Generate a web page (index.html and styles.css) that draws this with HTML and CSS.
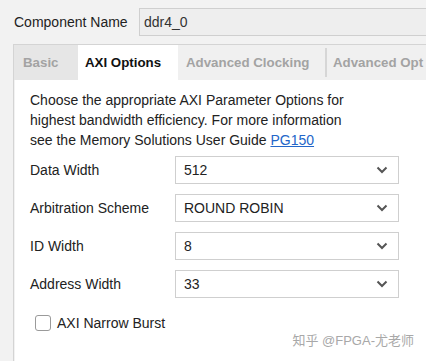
FILE: index.html
```html
<!DOCTYPE html>
<html lang="en">
<head>
  <meta charset="UTF-8" />
  <title>ddr4_0 - AXI Options</title>
  <link rel="stylesheet" href="styles.css">
</head>
<body>

<div class="header">
  <label for="comp-name">Component Name</label>
  <input type="text" id="comp-name" class="name-input" value="ddr4_0" />
</div>

<div class="tabbox">
  <div class="tabs">
    <div class="tab tab-basic">Basic</div>
    <div class="tab tab-active">AXI Options</div>
    <div class="tab tab-clock">Advanced Clocking</div>
    <div class="tab tab-opt">Advanced Opt</div>
  </div>

  <div class="panel">
    <p class="intro">Choose the appropriate AXI Parameter Options for highest bandwidth efficiency. For more information see the Memory Solutions User Guide <a href="#">PG150</a></p>

    <div class="fields">
      <span class="field-label">Data Width</span>
      <div class="select"><span>512</span><svg width="12" height="8" viewBox="0 0 12 8"><path d="M1.5 1.5 L6 6 L10.5 1.5" fill="none" stroke="#555" stroke-width="2"/></svg></div>

      <span class="field-label">Arbitration Scheme</span>
      <div class="select"><span>ROUND ROBIN</span><svg width="12" height="8" viewBox="0 0 12 8"><path d="M1.5 1.5 L6 6 L10.5 1.5" fill="none" stroke="#555" stroke-width="2"/></svg></div>

      <span class="field-label">ID Width</span>
      <div class="select"><span>8</span><svg width="12" height="8" viewBox="0 0 12 8"><path d="M1.5 1.5 L6 6 L10.5 1.5" fill="none" stroke="#555" stroke-width="2"/></svg></div>

      <span class="field-label">Address Width</span>
      <div class="select"><span>33</span><svg width="12" height="8" viewBox="0 0 12 8"><path d="M1.5 1.5 L6 6 L10.5 1.5" fill="none" stroke="#555" stroke-width="2"/></svg></div>
    </div>

    <label class="check"><span class="box"></span>AXI Narrow Burst</label>
  </div>
</div>

<div class="watermark">知乎 @FPGA-尤老师</div>

</body>
</html>
```

FILE: styles.css
```css
html, body {
  height: 100%;
}
body {
  margin: 0;
  background: #f2f2f2;
  font-family: "Liberation Sans", Arial, sans-serif;
  font-size: 14px;
  color: #222;
  overflow: hidden;
  display: flex;
  flex-direction: column;
  position: relative;
}
.header {
  display: flex;
  align-items: center;
  padding: 8px 0 0 14px;
}
.header label {
  width: 125px;
}
.name-input {
  flex: 1;
  height: 28px;
  box-sizing: border-box;
  margin-right: -4px;
  border: 1px solid #cfcfcf;
  background: #eeeeee;
  font: inherit;
  color: #333;
  padding: 0 4px;
}
.tabbox {
  flex: 1;
  margin: 8px 0 0 13px;
  border-left: 1px solid #d4d4d4;
  border-top: 1px solid #d4d4d4;
  display: flex;
  flex-direction: column;
}
.tabs {
  display: flex;
  height: 35px;
  background: #f0f0f0;
  white-space: nowrap;
  overflow: hidden;
}
.tab {
  display: flex;
  align-items: center;
  font-weight: bold;
  font-size: 13.3px;
  color: #a3a3a3;
  padding-left: 9px;
}
.tab-basic {
  width: 55px;
  background: #e6e6e6;
}
.tab-active {
  width: 91px;
  background: #fff;
  color: #111;
  padding-left: 7px;
  width: 93px;
}
.tab-clock {
  width: 139px;
  padding-left: 8px;
  border-right: 2px solid #d6d6d6;
  margin: 3px 0;
}
.tab-opt {
  padding-left: 6px;
}
.panel {
  flex: 1;
  background: #fff;
  margin-left: 1px;
  padding: 10px 0 0 15px;
}
.intro {
  margin: 0;
  width: 330px;
  line-height: 20px;
}
.intro a {
  color: #2366c9;
}
.fields {
  display: grid;
  grid-template-columns: 145px 224px;
  row-gap: 10px;
  align-items: center;
  margin-top: 6px;
}
.select {
  height: 28px;
  box-sizing: border-box;
  border: 1px solid #cfcfcf;
  display: flex;
  align-items: center;
  justify-content: space-between;
  padding: 0 10px 0 8px;
}
.check {
  display: flex;
  align-items: center;
  margin: 17px 0 0 5px;
}
.box {
  width: 14px;
  height: 14px;
  border: 1px solid #9a9a9a;
  border-radius: 3px;
  margin-right: 6px;
}
.watermark {
  position: absolute;
  right: 12px;
  bottom: 12px;
  font-family: "Liberation Sans", "Noto Sans CJK SC", sans-serif;
  font-size: 13px;
  color: #a8a8a8;
}
```
